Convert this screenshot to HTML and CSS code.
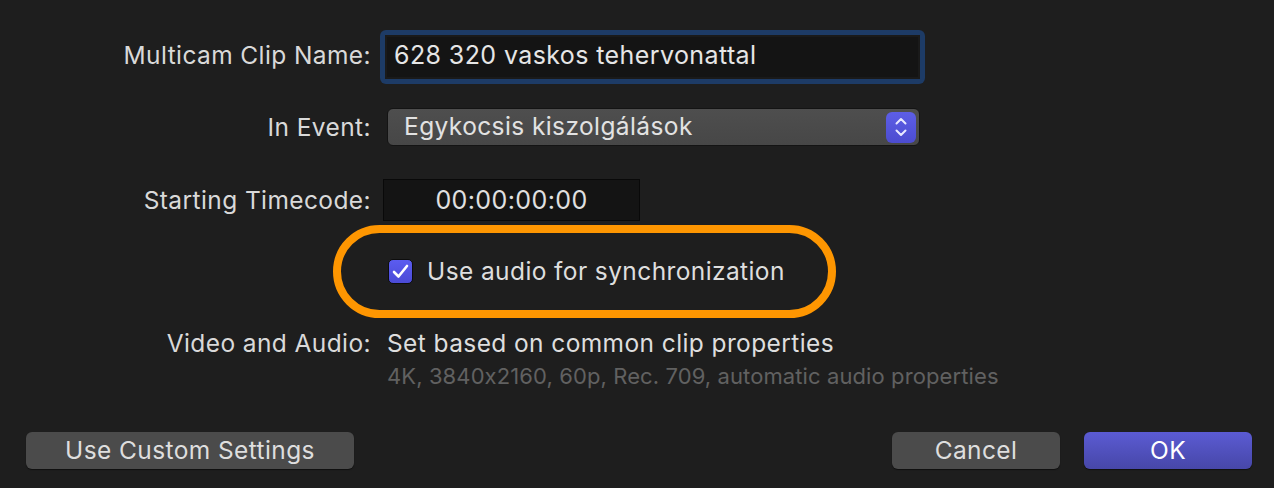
FILE: index.html
```html
<!DOCTYPE html>
<html lang="en">
<head>
    <meta charset="UTF-8">
    <meta name="viewport" content="width=device-width, initial-scale=1.0">
    <title>New Multicam Clip</title>
    <link rel="stylesheet" href="styles.css">
</head>
<body>
    <div class="dialog">
        <div class="row row-name">
            <label class="label" for="clip_name">Multicam Clip Name:</label>
            <div class="name-ring">
                <input type="text" id="clip_name" class="name-field" value="628 320 vaskos tehervonattal">
            </div>
        </div>

        <div class="row row-event">
            <span class="label">In Event:</span>
            <div class="popup">
                <span class="popup-text">Egykocsis kiszolgálások</span>
                <span class="stepper">
                    <svg width="14" height="22" viewBox="0 0 14 22">
                        <path d="M2.5 7.5 L7 3 L11.5 7.5" fill="none" stroke="#e8e8ff" stroke-width="2" stroke-linecap="round" stroke-linejoin="round"/>
                        <path d="M2.5 14.5 L7 19 L11.5 14.5" fill="none" stroke="#e8e8ff" stroke-width="2" stroke-linecap="round" stroke-linejoin="round"/>
                    </svg>
                </span>
            </div>
        </div>

        <div class="row row-tc">
            <span class="label">Starting Timecode:</span>
            <div class="timecode">00:00:00:00</div>
        </div>

        <div class="sync-highlight">
            <span class="checkbox">
                <svg width="17" height="15" viewBox="0 0 17 15">
                    <path d="M2 8 L6.5 12.5 L15 2" fill="none" stroke="#fff" stroke-width="2.6" stroke-linecap="round" stroke-linejoin="round"/>
                </svg>
            </span>
            <span class="sync-text">Use audio for synchronization</span>
        </div>

        <div class="row row-format">
            <span class="label">Video and Audio:</span>
            <div class="format">
                <div class="format-main">Set based on common clip properties</div>
                <div class="format-sub">4K, 3840x2160, 60p, Rec. 709, automatic audio properties</div>
            </div>
        </div>

        <div class="buttons">
            <button class="btn btn-custom">Use Custom Settings</button>
            <div class="spacer"></div>
            <button class="btn btn-cancel">Cancel</button>
            <button class="btn btn-ok">OK</button>
        </div>
    </div>
</body>
</html>
```

FILE: styles.css
```css
body {
    margin: 0;
    background-color: #1e1e1e;
    color: #dcdcdc;
    font-family: Inter, "Noto Sans", sans-serif;
    font-size: 24.5px;
    letter-spacing: 0.4px;
    font-feature-settings: "calt" 0;
}
.dialog {
    width: 1274px;
    height: 488px;
    overflow: hidden;
}
.row {
    display: flex;
    align-items: center;
}
.label {
    width: 371px;
    flex: none;
    text-align: right;
    color: #d9d9d9;
}
.row-name {
    padding-top: 30px;
    height: 54px;
}
.row-name .label {
    margin-top: -4px;
}
.name-ring {
    margin-left: 9px;
    width: 545px;
    height: 54px;
    box-sizing: border-box;
    padding: 5px;
    background-color: #1d3b66;
    border-radius: 6px;
}
.name-field {
    width: 100%;
    height: 100%;
    box-sizing: border-box;
    margin: 0;
    padding: 0 0 4px 7px;
    border: 2px solid #1a1a1a;
    background-color: #141414;
    color: #e6e6e6;
    font-family: inherit;
    font-size: 25px;
    letter-spacing: 0.4px;
    font-feature-settings: inherit;
    outline: none;
}
.row-event {
    margin-top: 24px;
    height: 38px;
}
.popup {
    margin-left: 16px;
    width: 533px;
    height: 38px;
    box-sizing: border-box;
    display: flex;
    align-items: center;
    padding: 0 3px 0 16px;
    background: linear-gradient(#4e4e4e, #474747);
    border: 1px solid #141414;
    border-radius: 6px;
}
.popup-text {
    flex: 1;
    color: #e2e2e2;
    margin-top: -2px;
}
.stepper {
    width: 30px;
    height: 31px;
    display: flex;
    align-items: center;
    justify-content: center;
    background: linear-gradient(#5d5ee6, #4c4cd0);
    border-radius: 6px;
}
.row-tc {
    margin-top: 33px;
    height: 42px;
}
.timecode {
    margin-left: 12px;
    width: 257px;
    height: 42px;
    box-sizing: border-box;
    border: 1px solid #090909;
    background-color: #141414;
    text-align: center;
    line-height: 40px;
    color: #e0e0e0;
    font-size: 25px;
}
.sync-highlight {
    margin: 4px 0 0 333px;
    width: 503px;
    height: 93px;
    box-sizing: border-box;
    border: 8px solid #fe9601;
    border-radius: 47px;
    display: flex;
    align-items: center;
    padding-left: 47px;
}
.checkbox {
    width: 25px;
    height: 25px;
    box-sizing: border-box;
    display: flex;
    align-items: center;
    justify-content: center;
    background: linear-gradient(#5b5cf0, #4b4bd6);
    border: 1px solid #0d0d0d;
    border-radius: 5px;
}
.sync-text {
    margin-left: 14px;
    margin-top: -2px;
    color: #dedede;
}
.row-format {
    margin-top: 9px;
    align-items: flex-start;
}
.row-format .label {
    line-height: 33px;
}
.format {
    margin-left: 16px;
}
.format-main {
    line-height: 33px;
    color: #dedede;
}
.format-sub {
    line-height: 33px;
    font-size: 22px;
    letter-spacing: 0.1px;
    color: #616161;
}
.buttons {
    display: flex;
    margin-top: 39px;
    padding: 0 22px 0 26px;
    gap: 24px;
}
.spacer {
    flex: 1;
}
.btn {
    height: 37px;
    border: none;
    border-radius: 6px;
    background-color: #4b4b4b;
    color: #dedede;
    font-family: inherit;
    font-size: inherit;
    letter-spacing: inherit;
    padding: 0 0 2px 0;
    box-shadow: 0 1px 1px rgba(0, 0, 0, 0.5);
}
.btn-custom {
    width: 328px;
}
.btn-cancel {
    width: 168px;
}
.btn-ok {
    width: 168px;
    background: linear-gradient(#5b5bd3, #4747a8);
    color: #ffffff;
}
```
